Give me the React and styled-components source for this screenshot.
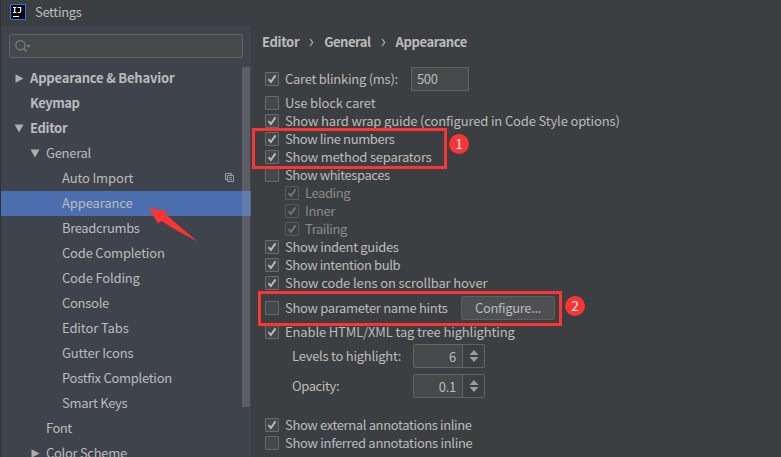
import React from 'react';
import styled, { createGlobalStyle, css } from 'styled-components';

const Global = createGlobalStyle`
  *, *::before, *::after { box-sizing: border-box; }
  body {
    margin: 0;
    background: #3c3f41;
    color: #bbbbbb;
    font: 13px/18px "Noto Sans CJK SC", "Noto Sans", sans-serif;
    overflow: hidden;
  }
`;

const Window = styled.div`
  position: relative;
  width: 781px;
  height: 457px;
  display: flex;
  flex-direction: column;
  overflow: hidden;
  background: #3c3f41;
  border-left: 1px solid #303234;
`;

const TitleBar = styled.header`
  flex: none;
  display: flex;
  align-items: center;
  gap: 9px;
  height: 26px;
  padding: 0 0 2px 9px;
`;

const Body = styled.div`
  flex: 1;
  min-height: 0;
  display: flex;
`;

const Sidebar = styled.aside`
  flex: none;
  display: flex;
  flex-direction: column;
  width: 250px;
  padding-top: 8px;
  background: #3f434c;
`;

const Search = styled.div`
  flex: none;
  display: flex;
  align-items: center;
  width: 234px;
  height: 24px;
  margin: 0 0 8px 8px;
  padding-left: 5px;
  border: 1px solid #646464;
  border-radius: 2px;
  background: #45494a;
`;

const TreeArea = styled.div`
  position: relative;
  flex: 1;
  min-height: 0;
  overflow: hidden;
`;

const Scrollbar = styled.div`
  position: absolute;
  top: 1px;
  right: 1px;
  width: 8px;
  height: 340px;
  background: rgba(166, 166, 166, 0.28);
`;

const TreeRow = styled.div`
  display: flex;
  align-items: center;
  height: 25px;
  padding: 0 17px 2px ${(p) => 13 + p.$level * 16}px;
  background: ${(p) => (p.$selected ? '#4b6eaf' : 'transparent')};
`;

const Twisty = styled.span`
  display: flex;
  width: 16px;
`;

const Label = styled.span`
  white-space: pre;
  font-weight: ${(p) => (p.$bold ? 700 : 400)};
  letter-spacing: ${(p) => p.$track || 0}px;
  color: ${(p) => (p.$dim ? '#8a8a8a' : 'inherit')};
`;

const CopyMark = styled.svg`
  margin-left: auto;
`;

const Content = styled.main`
  flex: 1;
  padding: 6px 0 0 11px;
`;

const Breadcrumb = styled.nav`
  display: flex;
  align-items: center;
  height: 20px;
  margin-bottom: 15px;
`;

const Chevron = styled.svg`
  margin: 0 9px;
`;

const Line = styled.div`
  display: flex;
  align-items: center;
  height: ${(p) => p.$h || 18}px;
  margin-top: ${(p) => p.$top || 0}px;
  padding-left: ${(p) => p.$indent || 3}px;
`;

const Box = styled.span`
  flex: none;
  display: flex;
  width: 14px;
  height: 14px;
  margin-right: 6px;
  border: 1px solid ${(p) => (p.$dim ? '#595b5d' : '#6b6b6b')};
  border-radius: 1px;
  background: ${(p) => (p.$dim ? '#3c3f41' : '#43494a')};
`;

const field = css`
  display: flex;
  align-items: center;
  height: 24px;
  border: 1px solid #646464;
`;

const TextField = styled.div`
  ${field}
  width: 58px;
  margin-left: auto;
  padding: 0 0 1px 5px;
  background: #45494a;
  letter-spacing: -0.4px;
`;

const CaretLine = styled(Line)`
  width: 207px;
`;

const Button = styled.button`
  width: 94px;
  height: 24px;
  margin: 0 0 0 auto;
  padding: 0;
  border: 1px solid #5e6060;
  border-radius: 2px;
  background: #4c5052;
  color: inherit;
  font: inherit;
  letter-spacing: -0.33px;
`;

const HintLine = styled(Line)`
  width: 293px;
`;

const SpinLine = styled(Line)`
  width: 223px;
`;

const Spinner = styled.div`
  ${field}
  width: 72px;
  margin-left: auto;
  border-radius: 2px;
`;

const SpinValue = styled.span`
  width: 49px;
  height: 22px;
  padding-right: 6px;
  border-right: 1px solid #646464;
  background: #45494a;
  text-align: right;
  line-height: 23px;
  letter-spacing: -0.3px;
`;

const SpinArrows = styled.svg`
  margin: auto;
`;

const Frame = styled.div`
  position: absolute;
  left: ${(p) => p.$x}px;
  top: ${(p) => p.$y}px;
  width: ${(p) => p.$w}px;
  height: ${(p) => p.$h}px;
  border: 3px solid #fb3434;
`;

const Badge = styled.div`
  position: absolute;
  left: ${(p) => p.$x}px;
  top: ${(p) => p.$y}px;
  width: 20px;
  height: 20px;
  border-radius: 50%;
  background: #fb3434;
  color: #fff;
  text-align: center;
  line-height: 19px;
`;

const Pointer = styled.svg`
  position: absolute;
  left: 146px;
  top: 206px;
`;

const Logo = () => (
  <svg width="16" height="16" viewBox="0 0 16 16" fill="none">
    <rect width="16" height="16" fill="#087cfa" />
    <rect x="1" y="1" width="14" height="14" fill="#000" />
    <path d="M3 3.5h3.4M4.7 3.5v5M3 8.5h3.4M7.8 3.5h2.9v3.6q0 1.4-1.4 1.4h-1.6" stroke="#fff" strokeWidth="1.2" />
    <path d="M3 12.5h6" stroke="#fff" strokeWidth="1" />
  </svg>
);

const SearchIcon = () => (
  <svg width="18" height="14" viewBox="0 0 18 14" fill="none">
    <circle cx="5.4" cy="6.2" r="4.6" stroke="#6e7f89" strokeWidth="1.3" />
    <path d="M8.6 9.4l3 3" stroke="#6e7f89" strokeWidth="1.5" />
    <path d="M11.2 6h4.8l-2.4 2.8z" fill="#6e7f89" />
  </svg>
);

const Arrow = ({ open }) => (
  <svg width="10" height="10" viewBox="0 0 10 10">
    <path d={open ? 'M.5 1.5h9L5 9.5z' : 'M1.5 1.2v8.6l8-4.3z'} fill="#adadad" />
  </svg>
);

const Check = ({ on, dim, children, track }) => (
  <>
    <Box $dim={dim}>
      {on && (
        <svg width="12" height="12" viewBox="0 0 12 12" fill="none">
          <path d="M2.5 6.2l2.4 2.8L9.5 2.4" stroke={dim ? '#717375' : '#bbbbbb'} strokeWidth="1.9" />
        </svg>
      )}
    </Box>
    <Label $dim={dim} $track={track}>{children}</Label>
  </>
);

const Arrows = () => (
  <SpinArrows width="10" height="14" viewBox="0 0 10 14">
    <path d="M.5 6h9L5 1zM.5 8h9L5 13z" fill="#9a9da0" />
  </SpinArrows>
);

const Separator = () => (
  <Chevron width="7" height="10" viewBox="0 0 7 10" fill="none">
    <path d="M2 2l2.7 3.5L2 9" stroke="#bbb" strokeWidth="1.1" />
  </Chevron>
);

const tree = [
  { text: 'Appearance & Behavior', level: 0, arrow: 'closed', bold: true, track: -0.2 },
  { text: 'Keymap', level: 0, bold: true, track: -0.5 },
  { text: 'Editor', level: 0, arrow: 'open', bold: true, track: -0.33 },
  { text: 'General', level: 1, arrow: 'open', track: -0.28 },
  { text: 'Auto Import', level: 2, mark: true, track: -0.15 },
  { text: 'Appearance', level: 2, selected: true, track: -0.12 },
  { text: 'Breadcrumbs', level: 2, track: -0.36 },
  { text: 'Code Completion', level: 2, track: -0.2 },
  { text: 'Code Folding', level: 2, track: -0.17 },
  { text: 'Console', level: 2, track: -0.28 },
  { text: 'Editor Tabs', level: 2, track: -0.1 },
  { text: 'Gutter Icons', level: 2, track: -0.17 },
  { text: 'Postfix Completion', level: 2, track: -0.28 },
  { text: 'Smart Keys', level: 2, track: -0.3 },
  { text: 'Font', level: 1, track: -0.5 },
  { text: 'Color Scheme', level: 1, arrow: 'closed', track: -0.3 },
];

export default function App() {
  return (
    <Window>
      <Global />
      <TitleBar><Logo /><Label $track={-0.35}>Settings</Label></TitleBar>
      <Body>
        <Sidebar>
          <Search><SearchIcon /></Search>
          <TreeArea>
            {tree.map((r) => (
              <TreeRow key={r.text} $level={r.level} $selected={r.selected}>
                <Twisty>{r.arrow && <Arrow open={r.arrow === 'open'} />}</Twisty>
                <Label $bold={r.bold} $track={r.track}>{r.text}</Label>
                {r.mark && (
                  <CopyMark width="9" height="9" viewBox="0 0 9 9" fill="none" stroke="#9a9da3">
                    <path d="M2.5 6.5h-2v-6h6v2M2.5 2.5h6v6h-6zM4 4.5h3M4 6.5h3" />
                  </CopyMark>
                )}
              </TreeRow>
            ))}
            <Scrollbar />
          </TreeArea>
        </Sidebar>
        <Content>
          <Breadcrumb>
            <Label $bold $track={-0.33}>Editor</Label><Separator />
            <Label $bold $track={-0.5}>General</Label><Separator />
            <Label $bold $track={-0.4}>Appearance</Label>
          </Breadcrumb>
          <CaretLine $h={24}>
            <Check on track={-0.26}>Caret blinking (ms):</Check>
            <TextField>500</TextField>
          </CaretLine>
          <Line $top={3}><Check track={-0.13}>Use block caret</Check></Line>
          <Line><Check on track={-0.15}>Show hard wrap guide (configured in Code Style options)</Check></Line>
          <Line><Check on track={-0.4}>Show line numbers</Check></Line>
          <Line><Check on track={-0.22}>Show method separators</Check></Line>
          <Line><Check track={-0.43}>Show whitespaces</Check></Line>
          <Line $indent={23}><Check on dim track={-0.43}>Leading</Check></Line>
          <Line $indent={23}><Check on dim track={-0.4}>Inner</Check></Line>
          <Line $indent={23}><Check on dim track={-0.43}>Trailing</Check></Line>
          <Line><Check on track={-0.33}>Show indent guides</Check></Line>
          <Line><Check on track={-0.42}>Show intention bulb</Check></Line>
          <Line><Check on track={-0.12}>Show code lens on scrollbar hover</Check></Line>
          <HintLine $h={24} $top={4}>
            <Check track={-0.32}>Show parameter name hints</Check>
            <Button>Configure...</Button>
          </HintLine>
          <Line $top={3}><Check on track={-0.14}>Enable HTML/XML tag tree highlighting</Check></Line>
          <SpinLine $h={24} $top={3} $indent={30}>
            <Label $track={-0.25}>Levels to highlight:</Label>
            <Spinner><SpinValue>6</SpinValue><Arrows /></Spinner>
          </SpinLine>
          <SpinLine $h={24} $top={6} $indent={30}>
            <Label $track={-0.4}>Opacity:</Label>
            <Spinner><SpinValue>0.1</SpinValue><Arrows /></Spinner>
          </SpinLine>
          <Line $top={18}><Check on track={-0.37}>Show external annotations inline</Check></Line>
          <Line><Check track={-0.31}>Show inferred annotations inline</Check></Line>
        </Content>
      </Body>
      <Frame $x={251} $y={128} $w={195} $h={41} />
      <Frame $x={256.5} $y={291} $w={304} $h={35} />
      <Badge $x={448} $y={134}>1</Badge>
      <Badge $x={564} $y={296}>2</Badge>
      <Pointer width="52" height="38" viewBox="0 0 52 38">
        <path d="M2 2.2L19.8 5L18.2 7.8Q32 20 50 35Q33 27 14.6 15L11 17.6Z" fill="#fb3434" />
      </Pointer>
    </Window>
  );
}
